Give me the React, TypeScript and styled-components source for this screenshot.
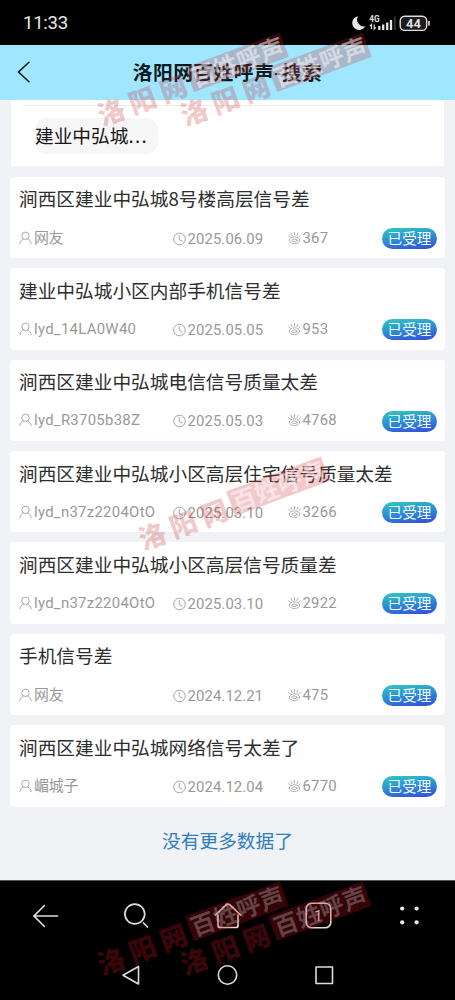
import React from 'react';
import styled, { createGlobalStyle } from 'styled-components';

const Global = createGlobalStyle`
  * { box-sizing: border-box; }
  body { margin: 0; background: #000; }
`;

const Screen = styled.div`
  position: relative;
  width: 455px;
  height: 1000px;
  overflow: hidden;
  display: flex;
  flex-direction: column;
  background: #000;
  font-family: 'Noto Sans CJK SC', sans-serif;
`;

const StatusBar = styled.div`
  height: 45px;
  flex: none;
  display: flex;
  align-items: center;
  justify-content: space-between;
  padding: 0 23px 0 23px;
  color: #e8e8e8;
`;

const Time = styled.span`
  font: 400 18.6px/22px Roboto, sans-serif;
  letter-spacing: -0.3px;
  padding-top: 1px;
`;

const Header = styled.header`
  height: 55px;
  flex: none;
  display: grid;
  grid-template-columns: 48px 1fr 48px;
  align-items: center;
  background: #9fe6fe;
`;

const BackButton = styled.button`
  display: flex;
  border: 0;
  padding: 0 0 2px 17px;
  background: none;
`;

const HeaderTitle = styled.h1`
  margin: -2px 0 0;
  font-size: 19.8px;
  letter-spacing: 0.4px;
  line-height: 28px;
  font-weight: 700;
  text-align: center;
  white-space: nowrap;
  color: #0b1a20;
`;

const Page = styled.main`
  height: 780px;
  flex: none;
  padding: 0 10px;
  background: #f0f2f6;
`;

const FilterPanel = styled.section`
  height: 65.5px;
  margin: 0 1px 11.3px;
  padding: 5px 12px 0;
  background: #fff;
`;

const FilterBody = styled.div`
  border-top: 1px solid #e9ebeb;
  padding: 12px 12px 0;
`;

const Tag = styled.div`
  width: 123px;
  height: 36px;
  border-radius: 12px;
  background: #f6f6f6;
  font-size: 18.7px;
  line-height: 33px;
  color: #151515;
  white-space: nowrap;
`;

const Ellipsis = styled.span`
  letter-spacing: 1.3px;
`;

const List = styled.div`
  display: flex;
  flex-direction: column;
  gap: 10px;
`;

const Card = styled.article`
  height: 81.4px;
  padding: 7.6px 8px 0 9px;
  border-radius: 4px;
  background: #fff;
`;

const CardTitle = styled.h2`
  margin: 0;
  font-size: 18.7px;
  line-height: 28px;
  font-weight: 400;
  color: #2e2e2e;
  white-space: nowrap;
`;

const Meta = styled.div`
  display: grid;
  grid-template-columns: 153.5px 115px 1fr auto;
  align-items: center;
  margin-top: 13.4px;
  height: 24px;
  color: #999;
`;

const MetaItem = styled.span<{ $drop?: number; $spacing?: number }>`
  display: flex;
  align-items: center;
  gap: 2px;
  font-family: Roboto, 'Noto Sans CJK SC', sans-serif;
  font-size: 14.9px;
  line-height: 22px;
  letter-spacing: ${(p) => p.$spacing ?? 0}px;
  white-space: nowrap;
  margin-top: ${(p) => (p.$drop ?? 0) * 2 - 0.4}px;
`;

const Badge = styled.span`
  width: 55px;
  height: 21px;
  margin-top: 1px;
  border-radius: 11px;
  background: linear-gradient(172deg, #2fc4c6 5%, #2c8fd2 48%, #3454d8 92%);
  color: #f0fbff;
  font-size: 14.6px;
  line-height: 19px;
  text-align: center;
`;

const EndNote = styled.p`
  margin: 19px 0 0;
  font-size: 18.7px;
  line-height: 28px;
  text-align: center;
  color: #2f7fb9;
`;

const BrowserBar = styled.nav`
  height: 70px;
  flex: none;
  display: grid;
  grid-template-columns: repeat(5, 91px);
  border-top: 1px solid #555;
  place-items: center;
`;

const SystemBar = styled.nav`
  height: 50px;
  flex: none;
  display: flex;
  justify-content: center;
  align-items: center;
  gap: 74px;
  padding-right: 1px;
`;

const Stamp = styled.div<{ $x: number; $y: number; $dark?: boolean }>`
  position: absolute;
  left: ${(p) => p.$x}px;
  top: ${(p) => p.$y}px;
  display: flex;
  align-items: center;
  height: 26px;
  transform: rotate(-20.4deg);
  transform-origin: 0 100%;
  pointer-events: none;
  white-space: nowrap;
  color: ${(p) => (p.$dark ? 'rgba(190,20,30,.32)' : 'rgba(205,40,45,.27)')};
`;

const StampName = styled.span`
  width: 98px;
  font-size: 27px;
  line-height: 26px;
  font-weight: 900;
  letter-spacing: 6px;
`;

const StampBox = styled.span<{ $dark?: boolean }>`
  width: 101px;
  height: 26px;
  margin-bottom: 5px;
  padding-left: 2px;
  font-size: 24px;
  line-height: 24px;
  font-weight: 600;
  letter-spacing: 0.5px;
  background: ${(p) => (p.$dark ? 'rgba(200,15,25,.26)' : 'rgba(205,40,45,.25)')};
  color: ${(p) => (p.$dark ? 'rgba(190,190,190,.34)' : 'rgba(255,255,255,.5)')};
`;

const UserIcon = () => (
  <svg width="13" height="14" viewBox="0 0 13 14" fill="none" stroke="#aaa" strokeWidth="1">
    <circle cx="6.5" cy="4.8" r="3.7" />
    <path d="M4.3 8C2.4 8.8 1.1 10.5.8 12.8M8.7 8c1.9.8 3.2 2.5 3.5 4.8" strokeLinecap="round" />
  </svg>
);

const ClockIcon = () => (
  <svg width="13" height="14" viewBox="0 0 13 14" fill="none" stroke="#a5a5a5" strokeWidth="1">
    <circle cx="6.5" cy="7" r="5.8" />
    <path d="M6.2 3.5v4l3 1.5" strokeLinecap="round" strokeLinejoin="round" />
  </svg>
);

const EyeIcon = () => (
  <svg width="13" height="14" viewBox="0 0 13 14" fill="none" stroke="#a5a5a5" strokeWidth="0.9" strokeLinecap="round">
    <ellipse cx="6.5" cy="9.2" rx="5.2" ry="3.4" />
    <ellipse cx="6.5" cy="9.3" rx="2.7" ry="1.3" />
    <path d="M6.5 1.4v2.7M3 2.2l1 2.3M10 2.2l-1 2.3M.6 4.5l1.7 1.6M12.4 4.5l-1.7 1.6" />
  </svg>
);

const StatusIcons = () => (
  <svg width="80" height="20" viewBox="0 0 80 20" fill="none">
    <path d="M6.2 3.2A6.9 6.9 0 1 0 13.3 13.2A6.6 6.6 0 0 1 6.2 3.2Z" fill="#e6e6e6" />
    <text x="17.2" y="9" fontSize="8.2" fontWeight="700" fontFamily="Roboto, sans-serif" fill="#e6e6e6">4G</text>
    <path d="M19.5 16v-4.5l-1.700 1.6M22.2 11.5v4.500l1.7-1.6" stroke="#ddd" strokeWidth="1.2" />
    <path d="M27.3 17v-4M31.2 17v-5.5M35.2 17v-7.5M39 17V7" stroke="#e6e6e6" strokeWidth="2.3" />
    <path d="M42.8 17V3.5" stroke="#333" strokeWidth="2" />
    <rect x="48.2" y="3.2" width="26.5" height="14.2" rx="4.5" fill="#1c1c1c" stroke="#ddd" strokeWidth="1.4" />
    <path d="M77 8.5v3.5" stroke="#ddd" strokeWidth="1.6" strokeLinecap="round" />
    <text x="61.5" y="15" textAnchor="middle" fontSize="13" fontWeight="600" fontFamily="Roboto, sans-serif" fill="#e6e6e6">44</text>
  </svg>
);

const items = [
  { title: '涧西区建业中弘城8号楼高层信号差', user: '网友', date: '2025.06.09', views: '367' },
  { title: '建业中弘城小区内部手机信号差', user: 'lyd_14LA0W40', date: '2025.05.05', views: '953' },
  { title: '涧西区建业中弘城电信信号质量太差', user: 'lyd_R3705b38Z', date: '2025.05.03', views: '4768' },
  { title: '涧西区建业中弘城小区高层住宅信号质量太差', user: 'lyd_n37z2204OtO', date: '2025.03.10', views: '3266' },
  { title: '涧西区建业中弘城小区高层信号质量差', user: 'lyd_n37z2204OtO', date: '2025.03.10', views: '2922' },
  { title: '手机信号差', user: '网友', date: '2024.12.21', views: '475' },
  { title: '涧西区建业中弘城网络信号太差了', user: '嵋城子', date: '2024.12.04', views: '6770' },
];

const stamps = [
  { x: 103, y: 102 },
  { x: 186, y: 102 },
  { x: 144, y: 526 },
  { x: 103, y: 951, dark: true },
  { x: 186, y: 951, dark: true },
];

export default function App() {
  return (
    <Screen>
      <Global />
      <StatusBar>
        <Time>11:33</Time>
        <StatusIcons />
      </StatusBar>
      <Header>
        <BackButton aria-label="返回">
          <svg width="14" height="22" viewBox="0 0 14 22" fill="none" stroke="#111" strokeWidth="1.5" strokeLinecap="round">
            <path d="M12 1.2L1.5 11L12 20.8" />
          </svg>
        </BackButton>
        <HeaderTitle>洛阳网百姓呼声-搜索</HeaderTitle>
      </Header>
      <Page>
        <FilterPanel>
          <FilterBody>
            <Tag>建业中弘城<Ellipsis>...</Ellipsis></Tag>
          </FilterBody>
        </FilterPanel>
        <List>
          {items.map((it) => (
            <Card key={it.title}>
              <CardTitle>{it.title}</CardTitle>
              <Meta>
                <MetaItem $spacing={/^lyd/.test(it.user) ? 0.3 : -0.2}><UserIcon />{it.user}</MetaItem>
                <MetaItem $drop={1} $spacing={0.1}><ClockIcon />{it.date}</MetaItem>
                <MetaItem $spacing={0.2}><EyeIcon />{it.views}</MetaItem>
                <Badge>已受理</Badge>
              </Meta>
            </Card>
          ))}
        </List>
        <EndNote>没有更多数据了</EndNote>
      </Page>
      <BrowserBar>
        <svg width="26" height="24" viewBox="0 0 26 24" fill="none" stroke="#ddd" strokeWidth="1.6" strokeLinecap="round">
          <path d="M1 12H24.5M11.5 1.5L1 12L11.5 22.5" />
        </svg>
        <svg width="26" height="26" viewBox="0 0 26 26" fill="none" stroke="#ddd" strokeWidth="1.7" strokeLinecap="round">
          <circle cx="10.8" cy="11" r="9.9" />
          <path d="M19.500 20l4 4" />
        </svg>
        <svg width="28" height="26" viewBox="0 0 28 26" fill="none" stroke="#e5d8d8" strokeWidth="1.7" strokeLinecap="round" strokeLinejoin="round">
          <path d="M1.5 12L11.8 2.2Q14 .2 16.2 2.2L26.5 12M4 12v10.5q0 2 2 2H22q2 0 2-2V12" />
        </svg>
        <svg width="27" height="27" viewBox="0 0 27 27" fill="none">
          <rect x="1.2" y="1.2" width="24.6" height="24.6" rx="5.5" stroke="#e5d8d8" strokeWidth="1.6" />
          <text x="13.2" y="18.7" textAnchor="middle" fontSize="15" fontFamily="Roboto, sans-serif" fill="#e5d8d8">1</text>
        </svg>
        <svg width="20" height="20" viewBox="0 0 20 20" fill="#eee">
          <circle cx="2.2" cy="2.5" r="2.1" />
          <circle cx="16.6" cy="2.5" r="2.1" />
          <circle cx="2.2" cy="16.3" r="2.1" />
          <circle cx="16.6" cy="16.3" r="2.1" />
        </svg>
      </BrowserBar>
      <SystemBar>
        <svg width="22" height="22" viewBox="0 0 22 22" fill="none" stroke="#ddd" strokeWidth="1.6" strokeLinejoin="round">
          <path d="M18.5 2.5V20L3 11.2Z" />
        </svg>
        <svg width="22" height="22" viewBox="0 0 22 22" fill="none" stroke="#ddd" strokeWidth="1.6">
          <circle cx="11.5" cy="11" r="9.2" />
        </svg>
        <svg width="22" height="22" viewBox="0 0 22 22" fill="none" stroke="#ddd" strokeWidth="1.6" strokeLinejoin="round">
          <rect x="4" y="3" width="16.5" height="16.5" />
        </svg>
      </SystemBar>
      {stamps.map((s) => (
        <Stamp key={`${s.x}-${s.y}`} $x={s.x} $y={s.y} $dark={s.dark} aria-hidden="true">
          <StampName>洛阳网</StampName>
          <StampBox $dark={s.dark}>百姓呼声</StampBox>
        </Stamp>
      ))}
    </Screen>
  );
}
